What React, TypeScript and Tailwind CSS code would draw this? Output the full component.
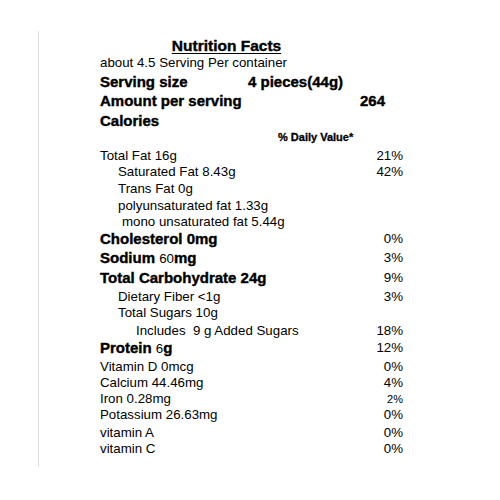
import React from "react";

type Row = {
  left: React.ReactNode;
  pct?: React.ReactNode;
  indent?: string;
  mt: string;
};

const B = ({ children }: { children: React.ReactNode }) => (
  <span className="font-bold text-[15px] [-webkit-text-stroke:0.4px_black]">{children}</span>
);

export default function App() {
  const rows: Row[] = [
    { left: "Total Fat 16g", pct: "21%", mt: "mt-[3px]" },
    { left: "Saturated Fat 8.43g", pct: "42%", indent: "pl-[18px]", mt: "mt-0" },
    { left: "Trans Fat 0g", indent: "pl-[18px]", mt: "mt-[1px]" },
    { left: "polyunsaturated fat 1.33g", indent: "pl-[18px]", mt: "mt-[1px]" },
    { left: "mono unsaturated fat 5.44g", indent: "pl-[22px]", mt: "mt-0" },
    { left: <B>Cholesterol 0mg</B>, pct: "0%", mt: "mt-[1px]" },
    {
      left: (
        <>
          <B>Sodium </B>
          <span>60</span>
          <B>mg</B>
        </>
      ),
      pct: "3%",
      mt: "mt-[3px]",
    },
    { left: <B>Total Carbohydrate 24g</B>, pct: "9%", mt: "mt-[4px]" },
    { left: "Dietary Fiber <1g", pct: "3%", indent: "pl-[18px]", mt: "mt-[3px]" },
    { left: "Total Sugars 10g", indent: "pl-[18px]", mt: "mt-0" },
    { left: "Includes  9 g Added Sugars", pct: "18%", indent: "pl-[36px]", mt: "mt-[2px]" },
    {
      left: (
        <>
          <B>Protein </B>
          <span>6</span>
          <B>g</B>
        </>
      ),
      pct: "12%",
      mt: "mt-[1px]",
    },
    { left: "Vitamin D 0mcg", pct: "0%", mt: "mt-[3px]" },
    { left: "Calcium 44.46mg", pct: "4%", mt: "mt-0" },
    { left: "Iron 0.28mg", pct: <span className="text-[11px]">2%</span>, mt: "mt-0" },
    { left: "Potassium 26.63mg", pct: "0%", mt: "mt-0" },
    { left: "vitamin A", pct: "0%", mt: "mt-[2px]" },
    { left: "vitamin C", pct: "0%", mt: "mt-0" },
  ];

  return (
    <div className="w-[500px] h-[500px] bg-white text-black font-['Liberation_Sans',Arial,sans-serif] pt-[31px]">
      <div className="ml-[38px] h-[436px] border-l border-[#dedede] pt-[7px] pl-[61px]">
        <div className="w-[303px]">
          <div className="h-4 flex items-center justify-center">
            <span className="font-bold text-[15.5px] underline underline-offset-[2px] ml-[-50px] [-webkit-text-stroke:0.4px_black]">
              Nutrition Facts
            </span>
          </div>
          <div className="h-4 mt-[1px] flex items-center text-[13.3px]">
            about 4.5 Serving Per container
          </div>
          <div className="h-4 mt-[3px] flex items-center font-bold text-[15px] [-webkit-text-stroke:0.4px_black]">
            <span className="w-[148px]">Serving size</span>
            <span>4 pieces(44g)</span>
          </div>
          <div className="h-4 mt-[3px] flex items-center font-bold text-[15px] [-webkit-text-stroke:0.4px_black]">
            <span className="w-[260px]">Amount per serving</span>
            <span>264</span>
          </div>
          <div className="h-4 mt-[4px] flex items-center font-bold text-[15px] [-webkit-text-stroke:0.4px_black]">
            Calories
          </div>
          <div className="h-4 flex items-center">
            <span className="ml-[178px] font-bold text-[11px] [-webkit-text-stroke:0.3px_black]">% Daily Value*</span>
          </div>
          {rows.map((r, i) => (
            <div
              key={i}
              className={`h-4 flex items-center justify-between text-[13.3px] whitespace-pre ${r.mt}`}
            >
              <span className={r.indent ?? ""}>{r.left}</span>
              {r.pct !== undefined && <span>{r.pct}</span>}
            </div>
          ))}
        </div>
      </div>
    </div>
  );
}
